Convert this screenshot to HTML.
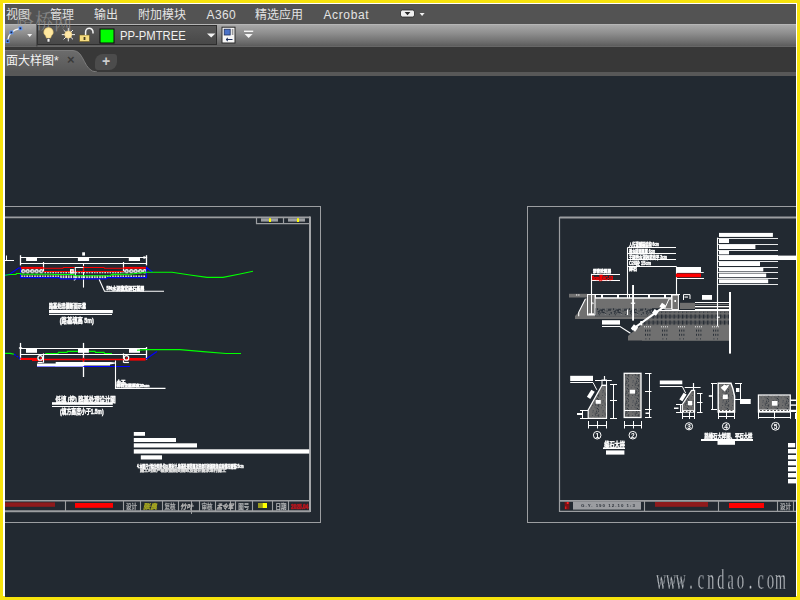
<!DOCTYPE html>
<html><head><meta charset="utf-8">
<style>
*{margin:0;padding:0;box-sizing:border-box}
html,body{width:800px;height:600px;overflow:hidden;background:#f7e30d;font-family:"Liberation Sans","Noto Sans CJK SC",sans-serif}
#frame{position:absolute;left:3px;top:3px;width:794px;height:593px;background:#fff}
#app{position:absolute;left:5px;top:4px;width:791px;height:592.5px;background:#222931;overflow:hidden}
#menu{position:absolute;left:0;top:0;width:791px;height:20px;background:#535353}
#menu span{position:absolute;top:4px;font-size:12px;line-height:14px;color:#e4e4e4;white-space:nowrap}
#ribbon{position:absolute;left:0;top:20px;width:791px;height:23px;background:linear-gradient(#c0c0c0 0,#a8a8a8 5%,#8e8e8e 40%,#6c6c6c 80%,#5e5e5e 94%,#6c6c6c 100%)}
#lay{position:absolute;left:32px;top:1px;width:180px;height:20px;background:linear-gradient(#585858,#484848);border:1px solid #2e2e2e}
#lay .t{position:absolute;left:81.5px;top:3px;font-size:12px;line-height:14px;color:#f0f0f0;transform:scaleX(.94);transform-origin:0 0;white-space:nowrap}
#tabs{position:absolute;left:0;top:43px;width:791px;height:25px;background:#383838}
#tabline{position:absolute;left:0;top:68px;width:791px;height:4px;background:#585858}
#tab1{position:absolute;left:0;top:3px;width:95px;height:26px}
#tab1 .t{position:absolute;left:1px;top:4px;font-size:12px;line-height:14px;color:#f2f2f2;white-space:nowrap}
#tab1 .x{position:absolute;left:62px;top:2px;font-size:13px;color:#3a3a3a;font-weight:bold}
#plus{position:absolute;left:90px;top:7px;width:22px;height:16px;background:#4c4c4c;border-radius:8px 3px 8px 3px;color:#ccc;font-weight:bold;font-size:14px;line-height:15px;text-align:center}
#wm{position:absolute;left:11px;top:-2px;font-size:18px;color:rgba(165,165,165,.6);font-family:"Noto Serif CJK SC",serif;transform:skewY(4deg) scaleY(1.2);transform-origin:0 0;white-space:nowrap;letter-spacing:1px}
#site{position:absolute;left:648px;top:561px;font-family:"Liberation Serif",serif;font-size:20px;color:#8a9199;white-space:nowrap;letter-spacing:1px}
svg{position:absolute;left:0;top:0}
#dwg,#ui{will-change:transform}
</style></head><body>
<div id="frame"></div>
<div id="app">
<div id="menu">
<span style="left:1px">视图</span><span style="left:45px">管理</span><span style="left:89px">输出</span><span style="left:133px">附加模块</span><span style="left:201.5px;letter-spacing:.4px">A360</span><span style="left:250px">精选应用</span><span style="left:318.4px;letter-spacing:.65px">Acrobat</span>
</div>
<div id="ribbon"><div id="lay"><span class="t">PP-PMTREE</span></div></div>
<div id="tabs"><div id="tab1"><svg width="95" height="26" style="left:0;top:0"><defs><linearGradient id="tg" x1="0" y1="0" x2="0" y2="1"><stop offset="0" stop-color="#6c6c6c"/><stop offset="1" stop-color="#545454"/></linearGradient></defs><path d="M0 0.5 H68 C80 0.5 78 22 92 22 V26 H0Z" fill="url(#tg)"/><path d="M0 0.5 H68 C80 0.5 78 22 92 22" fill="none" stroke="#7c7c7c" stroke-width="1"/></svg><span class="t">面大样图*</span><span class="x">×</span></div><div id="plus">+</div></div>
<div id="tabline"></div>
<div id="wm">路桥网</div>
<svg id="ui" width="791" height="592" viewBox="5 4 791 592">
<g>
<path d="M7.5 41 C8.5 34 13 29.6 20.4 28.4" fill="none" stroke="#f4f4f4" stroke-width="1.2"/>
<rect x="6.2" y="39.8" width="2.8" height="2.8" fill="#202840" stroke="#5a96ff" stroke-width=".9"/>
<rect x="10" y="31" width="2.8" height="2.8" fill="#202840" stroke="#5a96ff" stroke-width=".9"/>
<rect x="19" y="27" width="2.8" height="2.8" fill="#202840" stroke="#5a96ff" stroke-width=".9"/>
<polygon points="27.2,34 32.2,34 29.7,37" fill="#f4f4f4"/>
<rect x="36.4" y="24" width="1" height="22.5" fill="#3a3a3a"/>
<path d="M48.5 27.6 a4.6 4.6 0 0 1 3 8.2 l-1 2.4 h-4 l-1 -2.4 a4.6 4.6 0 0 1 3 -8.2z" fill="#ffe8a0" stroke="#d8b860" stroke-width=".5"/>
<rect x="47.1" y="38.4" width="2.8" height="3.6" fill="#f4f4f4" stroke="#333" stroke-width=".5"/>
<g stroke="#e8e8e8" stroke-width="1"><line x1="68.3" y1="28" x2="68.3" y2="41.4"/><line x1="61.8" y1="34.6" x2="75" y2="34.6"/><line x1="63.6" y1="30" x2="73" y2="39.4"/><line x1="73" y1="30" x2="63.6" y2="39.4"/><text transform="translate(0 589.3) scale(1 2.15)" x="661.0 671.0 680.9 690.9 700.8 710.8 720.7 730.6 740.6 750.5 760.5 770.5 780.4" y="0" text-anchor="middle" font-family="Liberation Serif,serif" font-size="14" fill="#c4c8cc" stroke="#222931" stroke-width=".3">www.cndao.com</text>
</g>
<circle cx="68.3" cy="34.6" r="3.6" fill="#ffe8a8" stroke="#e8c878" stroke-width=".6"/>
<rect x="79.6" y="35" width="9.8" height="6.6" fill="#f6dc80" stroke="#6a5a20" stroke-width=".6"/>
<rect x="83.6" y="37" width="1.8" height="3" fill="#4a4020"/>
<path d="M85.6 35 v-3 a3.6 3.6 0 0 1 7.4 0 v1.6" fill="none" stroke="#f4f4f4" stroke-width="1.5"/>
<rect x="100" y="29" width="14" height="14" fill="#00ff00" stroke="#0a0a0a" stroke-width="1"/>
<polygon points="207,33.4 215.4,33.4 211.2,37.6" fill="#f4f4f4"/>
<rect x="222" y="27.2" width="13" height="15.8" fill="#f6f6f6" stroke="#2a2a2a" stroke-width="1"/>
<rect x="224.2" y="29.2" width="6" height="5.8" fill="#4a72c8" stroke="#20305a" stroke-width=".8"/>
<rect x="231.8" y="29" width="1.6" height="6" fill="#9a9a9a"/>
<path d="M226 39.5 h6.5 M226 39.5 l2 -1.6 M226 39.5 l2 1.6" stroke="#20305a" stroke-width="1" fill="none"/>
<rect x="244" y="30.6" width="9.2" height="1.4" fill="#f4f4f4"/>
<polygon points="244.6,34 252.6,34 248.6,38" fill="#f4f4f4"/>
<rect x="400.5" y="10" width="14" height="7" rx="2" fill="#f0f0f0" stroke="#2a2a2a" stroke-width=".8"/>
<polygon points="404.6,12 410.4,12 407.5,15.2" fill="#2a2a2a"/>
<polygon points="419.6,13 424.6,13 422.1,16" fill="#f0f0f0"/>
<text transform="translate(0 589.3) scale(1 2.15)" x="661.0 671.0 680.9 690.9 700.8 710.8 720.7 730.6 740.6 750.5 760.5 770.5 780.4" y="0" text-anchor="middle" font-family="Liberation Serif,serif" font-size="14" fill="#c4c8cc" stroke="#222931" stroke-width=".3">www.cndao.com</text>
</g>

</svg>
<svg id="dwg" width="791" height="592" viewBox="5 4 791 592" >
<defs>
<pattern id="hx" x="21" y="269" width="4.5" height="4.4" patternUnits="userSpaceOnUse"><circle cx="2.25" cy="2.2" r="1.45" fill="none" stroke="#fff" stroke-width="1.35"/><rect x="0" y="1.5" width=".8" height="1.4" fill="#fff"/></pattern>
<pattern id="dots" x="21" y="0" width="2.6" height="1.4" patternUnits="userSpaceOnUse"><rect x=".3" y="0" width="1.3" height="1.4" fill="#fff"/></pattern>
<pattern id="st1" width="10" height="10" patternUnits="userSpaceOnUse"><rect width="10" height="10" fill="#6e6e6e"/><rect x="2.2" y="5.0" width=".9" height=".9" fill="#3c4249"/><rect x="8.4" y="4.4" width=".9" height=".9" fill="#2a3038"/><rect x="5.6" y="8.4" width=".9" height=".9" fill="#4a4e54"/><rect x="2.4" y="2.2" width=".9" height=".9" fill="#4a4e54"/><rect x="5.0" y="5.1" width=".9" height=".9" fill="#4a4e54"/><rect x="5.9" y="1.4" width=".9" height=".9" fill="#30363e"/><rect x="8.0" y="4.8" width=".9" height=".9" fill="#2a3038"/><rect x="6.2" y="0.6" width=".9" height=".9" fill="#2a3038"/><rect x="2.8" y="0.3" width=".9" height=".9" fill="#3c4249"/><rect x="4.3" y="6.6" width=".9" height=".9" fill="#4a4e54"/><rect x="6.6" y="8.5" width=".9" height=".9" fill="#4a4e54"/><rect x="6.7" y="5.3" width=".9" height=".9" fill="#30363e"/><rect x="8.1" y="0.9" width=".9" height=".9" fill="#30363e"/><rect x="4.6" y="2.4" width=".9" height=".9" fill="#4a4e54"/><rect x="7.2" y="7.9" width=".9" height=".9" fill="#4a4e54"/><rect x="4.7" y="3.5" width=".9" height=".9" fill="#3c4249"/><rect x="4.9" y="3.7" width=".9" height=".9" fill="#30363e"/><rect x="8.3" y="6.3" width=".9" height=".9" fill="#2a3038"/><rect x="7.9" y="9.1" width=".9" height=".9" fill="#30363e"/><rect x="6.4" y="3.0" width=".9" height=".9" fill="#2a3038"/><rect x="6.6" y="1.9" width=".9" height=".9" fill="#3c4249"/><rect x="2.6" y="0.6" width=".9" height=".9" fill="#4a4e54"/><rect x="0.8" y="7.4" width=".9" height=".9" fill="#4a4e54"/><rect x="8.3" y="0.2" width=".9" height=".9" fill="#4a4e54"/><rect x="7.1" y="8.0" width=".9" height=".9" fill="#2a3038"/><rect x="5.6" y="7.0" width=".9" height=".9" fill="#4a4e54"/></pattern>
<pattern id="st2" x="596" y="308" width="16" height="8" patternUnits="userSpaceOnUse"><rect width="16" height="8" fill="#646668"/><rect x="6.8" y="3.7" width="1.2" height="1" fill="#3c4249"/><rect x="2.8" y="3.4" width="1" height="1.2" fill="#2a3038"/><rect x="4.6" y="0.8" width="1.5" height="1.2" fill="#252b33"/><rect x="14.5" y="4.2" width="1.5" height="1" fill="#2a3038"/><rect x="12.5" y="0.7" width="1" height="1" fill="#252b33"/><rect x="9.0" y="5.0" width="1.2" height="1" fill="#30363e"/><rect x="7.8" y="4.1" width="1" height="1" fill="#3c4249"/><rect x="6.9" y="2.0" width="1.5" height="1.2" fill="#252b33"/><rect x="4.7" y="1.7" width="1" height="1" fill="#30363e"/><rect x="8.4" y="0.9" width="1.2" height="1.2" fill="#252b33"/><rect x="1.0" y="0.4" width="1" height="1" fill="#252b33"/><rect x="13.9" y="0.6" width="1.5" height="1.2" fill="#3c4249"/><rect x="6.3" y="3.7" width="1.5" height="1.2" fill="#2a3038"/><rect x="5.1" y="2.2" width="1.2" height="1" fill="#252b33"/><rect x="2.0" y="4.5" width="1" height="1.2" fill="#252b33"/><rect x="12.0" y="1.4" width="1.2" height="1" fill="#2a3038"/><rect x="14.8" y="4.9" width="1.5" height="1.2" fill="#3c4249"/><rect x="1.7" y="2.8" width="1" height="1.2" fill="#2a3038"/><rect x="13.0" y="6.1" width="1" height="1" fill="#30363e"/><rect x="2.8" y="6.3" width="1" height="1" fill="#252b33"/><rect x="3.2" y="1.8" width="1.2" height="1.2" fill="#30363e"/><rect x="1.1" y="0.8" width="1" height="1.2" fill="#2a3038"/><rect x="5.6" y="3.0" width="1.5" height="1" fill="#3c4249"/><rect x="13.0" y="1.4" width="1.2" height="1" fill="#2a3038"/><rect x="12.3" y="1.8" width="1" height="1" fill="#2a3038"/><rect x="10.3" y="2.6" width="1.5" height="1" fill="#3c4249"/><rect x="6.3" y="0.9" width="1.5" height="1.2" fill="#252b33"/><rect x="3.6" y="4.5" width="1.2" height="1.2" fill="#30363e"/><rect x="4.4" y="1.4" width="1" height="1" fill="#252b33"/><rect x="7.2" y="4.2" width="1.2" height="1" fill="#252b33"/><rect x="13.8" y="1.5" width="1" height="1.2" fill="#252b33"/><rect x="6.2" y="1.8" width="1" height="1.2" fill="#252b33"/><rect x="5.5" y="3.7" width="1" height="1.2" fill="#2a3038"/><rect x="2.1" y="3.0" width="1.5" height="1" fill="#30363e"/><rect x="8.8" y="5.8" width=".9" height=".9" fill="#9a9a9a"/><rect x="7.1" y="2.4" width=".9" height=".9" fill="#9a9a9a"/><rect x="4.7" y="0.5" width=".9" height=".9" fill="#9a9a9a"/><rect x="9.0" y="0.7" width=".9" height=".9" fill="#9a9a9a"/></pattern>
<pattern id="st3" x="656" y="313.6" width="4.2" height="6" patternUnits="userSpaceOnUse"><rect width="4.2" height="6" fill="#6c6c6c"/><rect x=".5" y=".8" width="1.7" height="4.2" fill="#252b33"/><rect x="2.9" y="1.4" width=".9" height="3" fill="#2d333b"/></pattern>
<pattern id="st3a" x="656" y="310.8" width="4.2" height="2.8" patternUnits="userSpaceOnUse"><rect width="4.2" height="2.8" fill="#6c6c6c"/><rect x=".8" y=".8" width="1.2" height="1.4" fill="#30363e"/><rect x="2.9" y=".6" width=".8" height="1.2" fill="#3a4048"/></pattern>
<pattern id="st4" x="642" y="326" width="17" height="15" patternUnits="userSpaceOnUse"><rect width="17" height="15" fill="#707070"/><g fill="#e8e8e8"><rect x="2" y=".3" width="1" height="1"/><rect x="4" y=".3" width="1" height="1"/><rect x="6" y=".3" width="1" height="1"/><rect x="8" y=".3" width="1" height="1"/></g><g fill="#2a3038"><rect x="3" y="3.6" width="1" height="2"/><rect x="5.2" y="3.6" width="1" height="2"/><rect x="7.4" y="3.6" width="1" height="2"/><rect x="3" y="7.8" width="1" height="2"/><rect x="5.2" y="7.8" width="1" height="2"/><rect x="7.4" y="7.8" width="1" height="2"/><rect x="3.4" y="12.4" width="1" height="1"/><rect x="7" y="12.4" width="1" height="1"/></g></pattern>
</defs>
<rect x="-20.5" y="206.5" width="341.0" height="316.0" fill="none" stroke="#9c9ea1" stroke-width="1"/>
<polyline points="-20,217.3 310,217.3" fill="none" stroke="#9c9ea1" stroke-width="1.7" />
<polyline points="310,216.5 310,512.1" fill="none" stroke="#a4a6a9" stroke-width="2" />
<polyline points="-20,511.2 310,511.2" fill="none" stroke="#9c9ea1" stroke-width="1.9" />
<polyline points="256.5,217.5 256.5,223.7 310,223.7" fill="none" stroke="#9c9ea1" stroke-width="1.2" />
<line x1="283.5" y1="217.5" x2="283.5" y2="223.7" stroke="#9c9ea1" stroke-width="1.2" />
<rect x="261" y="218.3" width="17" height="3.3" fill="#9c9ea1" />
<rect x="288" y="218.3" width="17" height="3.3" fill="#9c9ea1" />
<rect x="269" y="218.3" width="2" height="3.7" fill="#ffff00" />
<rect x="297" y="218.3" width="2" height="3.7" fill="#ffff00" />
<line x1="0" y1="500.8" x2="310" y2="500.8" stroke="#9c9ea1" stroke-width="1.6" />
<line x1="65.5" y1="500.8" x2="65.5" y2="511.2" stroke="#9c9ea1" stroke-width="1.1" />
<line x1="123.5" y1="500.8" x2="123.5" y2="511.2" stroke="#9c9ea1" stroke-width="1.1" />
<line x1="140.5" y1="500.8" x2="140.5" y2="511.2" stroke="#9c9ea1" stroke-width="1.1" />
<line x1="162.5" y1="500.8" x2="162.5" y2="511.2" stroke="#9c9ea1" stroke-width="1.1" />
<line x1="178.5" y1="500.8" x2="178.5" y2="511.2" stroke="#9c9ea1" stroke-width="1.1" />
<line x1="199.5" y1="500.8" x2="199.5" y2="511.2" stroke="#9c9ea1" stroke-width="1.1" />
<line x1="215.5" y1="500.8" x2="215.5" y2="511.2" stroke="#9c9ea1" stroke-width="1.1" />
<line x1="235.5" y1="500.8" x2="235.5" y2="511.2" stroke="#9c9ea1" stroke-width="1.1" />
<line x1="252.5" y1="500.8" x2="252.5" y2="511.2" stroke="#9c9ea1" stroke-width="1.1" />
<line x1="272.5" y1="500.8" x2="272.5" y2="511.2" stroke="#9c9ea1" stroke-width="1.1" />
<line x1="288.5" y1="500.8" x2="288.5" y2="511.2" stroke="#9c9ea1" stroke-width="1.1" />
<rect x="5" y="502.4" width="50" height="4.4" fill="#8e1a1c" />
<rect x="75" y="503" width="38" height="4.8" fill="#ff0000" />
<rect x="258" y="503" width="4.5" height="5" fill="#9a9a1e" />
<rect x="262.5" y="503" width="4.5" height="5" fill="#ffff00" />
<line x1="191.5" y1="500" x2="191.5" y2="514" stroke="#9c9ea1" stroke-width="1" />
<line x1="230.5" y1="501" x2="230.5" y2="512" stroke="#9c9ea1" stroke-width="1" />
<text x="126" y="508.7" font-size="6.5" fill="#a9abad" stroke="#a9abad" stroke-width="0.2" font-weight="bold" textLength="11" lengthAdjust="spacingAndGlyphs">设计</text>
<text x="164.5" y="508.7" font-size="6.5" fill="#a9abad" stroke="#a9abad" stroke-width="0.2" font-weight="bold" textLength="11" lengthAdjust="spacingAndGlyphs">复核</text>
<text x="201.5" y="508.7" font-size="6.5" fill="#a9abad" stroke="#a9abad" stroke-width="0.2" font-weight="bold" textLength="11" lengthAdjust="spacingAndGlyphs">审核</text>
<text x="238.3" y="508.7" font-size="6.5" fill="#a9abad" stroke="#a9abad" stroke-width="0.2" font-weight="bold" textLength="11" lengthAdjust="spacingAndGlyphs">图号</text>
<text x="275.5" y="508.7" font-size="6.5" fill="#b4b6b8" stroke="#b4b6b8" stroke-width="0.2" font-weight="bold" textLength="11" lengthAdjust="spacingAndGlyphs">日期</text>
<text x="143" y="508.7" font-size="7" fill="#aaaa20" stroke="#aaaa20" stroke-width="0.45" font-weight="bold" font-style="italic" textLength="14" lengthAdjust="spacingAndGlyphs">张良</text>
<text x="180" y="508.5" font-size="6.5" fill="#b0b0b0" stroke="#b0b0b0" stroke-width="0.45" font-style="italic" textLength="13" lengthAdjust="spacingAndGlyphs">竹叶</text>
<text x="216.5" y="508.5" font-size="6.5" fill="#b0b0b0" stroke="#b0b0b0" stroke-width="0.45" font-style="italic" textLength="17" lengthAdjust="spacingAndGlyphs">孟令军</text>
<text x="291" y="509" font-size="6.4" fill="#b4161e" stroke="#b4161e" stroke-width="0.7" font-weight="bold" textLength="17.5" lengthAdjust="spacingAndGlyphs">2025.04</text>
<rect x="21" y="269" width="22.5" height="4.4" fill="url(#hx)" />
<rect x="124" y="269" width="22" height="4.4" fill="url(#hx)" />
<rect x="21" y="275.4" width="125" height="1.8" fill="url(#dots)" />
<rect x="44" y="271.9" width="79.5" height="1.4" fill="url(#dots)" />
<rect x="60" y="277" width="47" height="1.4" fill="url(#dots)" />
<line x1="20.5" y1="257.5" x2="147" y2="257.5" stroke="#ffffff" stroke-width="1" />
<line x1="20.5" y1="263.5" x2="147" y2="263.5" stroke="#ffffff" stroke-width="1" />
<line x1="20.5" y1="255.2" x2="20.5" y2="265.4" stroke="#ffffff" stroke-width="1.3" />
<line x1="146.5" y1="255.2" x2="146.5" y2="265.4" stroke="#ffffff" stroke-width="1.3" />
<polygon points="147.6,257.5 143.5,256 143.5,259" fill="#ffffff" stroke="none" stroke-width="0" />
<line x1="43.5" y1="262" x2="43.5" y2="271.4" stroke="#ffffff" stroke-width="1.2" />
<line x1="123.5" y1="262" x2="123.5" y2="271.4" stroke="#ffffff" stroke-width="1.2" />
<rect x="26.1" y="258" width="10.9" height="3" fill="#ffffff" />
<rect x="77.9" y="258" width="11.2" height="3" fill="#ffffff" />
<rect x="128.8" y="258" width="11.2" height="3" fill="#ffffff" />
<rect x="82.2" y="252.3" width="2.8" height="3.3" fill="#ffffff" />
<line x1="83.5" y1="263.5" x2="83.5" y2="287.6" stroke="#ffffff" stroke-width="1.1" />
<line x1="5" y1="260.5" x2="14" y2="260.5" stroke="#ffffff" stroke-width="1" />
<line x1="6.5" y1="255.5" x2="6.5" y2="260" stroke="#ffffff" stroke-width="1" />
<rect x="20.5" y="266.9" width="23.2" height="1.9" fill="#ff0000" />
<rect x="123.5" y="266.9" width="23.0" height="1.9" fill="#ff0000" />
<polyline points="43.7,268.2 62.9,268.2 63.4,267.5 104,267.5 104.5,268.2 123.5,268.2" fill="none" stroke="#ff0000" stroke-width="1.1" />
<line x1="43.7" y1="271.5" x2="123.5" y2="271.5" stroke="#ff0000" stroke-width="1.1" />
<line x1="83.5" y1="266" x2="83.5" y2="271.4" stroke="#ff0000" stroke-width="1.1" />
<rect x="70" y="269.1" width="3.8" height="4.5" fill="#ffffff" />
<rect x="71.3" y="270.5" width="1.2" height="1.3" fill="#ff3030" />
<polyline points="83.5,267.5 75.3,267.5 75.3,279.5 73.8,280.2" fill="none" stroke="#ffffff" stroke-width="1.1" />
<polyline points="5,275.2 10,274 18.6,268 20.5,268 20.5,277.6 59.5,277.6 60.5,278.9 106.5,278.9 107.5,277.6 146.5,277.6 146.5,267.5 149,269.5 152.5,272" fill="none" stroke="#0000ff" stroke-width="1.15" />
<polyline points="5,275.3 10,274.5 16,274.4 16.5,273.5 20.5,273.5 21,274.2 52,274.2 53,274.5 73,274.5 75,275.7 110,275.7 112,274.4 130,274.2 146,272.2 172,272.2 190,275 207,277.3 223,277.3 240,274 253,271.3" fill="none" stroke="#00ff00" stroke-width="1.15" />
<polyline points="99.2,279.5 104.5,291.3 164,291.3" fill="none" stroke="#ffffff" stroke-width="1.1" />
<text x="106.4" y="289.6" font-size="4.6" fill="#ffffff" stroke="#ffffff" stroke-width="0.45" font-weight="bold" textLength="38" lengthAdjust="spacingAndGlyphs">5%水泥稳定碎石基层</text>
<text x="49" y="308.3" font-size="5.6" fill="#ffffff" stroke="#ffffff" stroke-width="0.45" font-weight="bold" textLength="37" lengthAdjust="spacingAndGlyphs">路基处理横断面示意</text>
<rect x="49" y="310" width="63.8" height="3.2" fill="#ffffff" />
<line x1="49" y1="314.5" x2="112" y2="314.5" stroke="#ffffff" stroke-width="1" />
<text x="59.8" y="322.6" font-size="7" fill="#ffffff" stroke="#ffffff" stroke-width="0.45" font-weight="bold" textLength="34" lengthAdjust="spacingAndGlyphs">(路基填高 5m)</text>
<line x1="20.5" y1="348.5" x2="147" y2="348.5" stroke="#ffffff" stroke-width="1.1" />
<line x1="20.5" y1="354.5" x2="147" y2="354.5" stroke="#ffffff" stroke-width="1.1" />
<line x1="20.5" y1="342.9" x2="20.5" y2="359.8" stroke="#ffffff" stroke-width="1.3" />
<polygon points="18.6,348 20.5,346.5 22.4,348 20.5,349.5" fill="#ffffff" stroke="none" stroke-width="0" />
<line x1="146.5" y1="347" x2="146.5" y2="359.5" stroke="#ffffff" stroke-width="1.3" />
<rect x="26" y="348.7" width="11" height="4.1" fill="#ffffff" />
<rect x="78" y="348.7" width="10.9" height="4.1" fill="#ffffff" />
<rect x="129" y="348.7" width="11" height="4.1" fill="#ffffff" />
<line x1="83.5" y1="342.9" x2="83.5" y2="377" stroke="#ffffff" stroke-width="1.3" />
<line x1="43.5" y1="353.4" x2="43.5" y2="362.8" stroke="#ffffff" stroke-width="1.2" />
<line x1="123.5" y1="353.4" x2="123.5" y2="362.8" stroke="#ffffff" stroke-width="1.2" />
<polyline points="5,353.3 10,353.4 14,354.3" fill="none" stroke="#00ff00" stroke-width="1.15" />
<polyline points="45.2,353.5 58,353.5 58.5,352.3 67,352.3 67.5,351.4 78,351.4" fill="none" stroke="#00ff00" stroke-width="1.15" />
<polyline points="89,351.4 95,351.4 95.5,352.3 104,352.3 104.5,353.5 112,353.5" fill="none" stroke="#00ff00" stroke-width="1.15" />
<polyline points="137,350.2 146,349.6 180,349.6 203,351.6 226,353.5 241,353.5" fill="none" stroke="#00ff00" stroke-width="1.15" />
<line x1="14" y1="354.3" x2="20.5" y2="358.6" stroke="#0000ff" stroke-width="1.3" stroke-dasharray="2,1"/>
<line x1="146" y1="359" x2="157" y2="351.5" stroke="#0000ff" stroke-width="1.15" />
<line x1="37" y1="366.5" x2="130" y2="366.5" stroke="#0000ff" stroke-width="1.2" />
<rect x="20.5" y="357.9" width="16.5" height="2.1" fill="#ff0000" />
<line x1="32" y1="360.5" x2="43" y2="360.5" stroke="#ff0000" stroke-width="1.1" />
<line x1="44" y1="359.5" x2="130" y2="359.5" stroke="#ff0000" stroke-width="1.4" />
<rect x="130" y="358" width="15.5" height="2.6" fill="#ff0000" />
<line x1="83.5" y1="357.8" x2="83.5" y2="361.8" stroke="#ff0000" stroke-width="1.3" />
<rect x="37" y="363.5" width="19" height="3.0" fill="#ffffff" />
<rect x="55.7" y="362" width="27.7" height="4.6" fill="#ffffff" />
<rect x="83.4" y="362" width="26.6" height="3.5" fill="#ffffff" />
<polygon points="110,362 115.5,362.4 115.5,363.4 110,364.5" fill="#ffffff" stroke="none" stroke-width="0" />
<circle cx="40.2" cy="357.9" r="2.3" fill="none" stroke="#ffffff" stroke-width="1.3"/>
<circle cx="40.800000000000004" cy="358.2" r=".9" fill="#ff0000"/>
<line x1="37.7" y1="362.5" x2="42.7" y2="362.5" stroke="#ffffff" stroke-width="1.2" />
<circle cx="126.4" cy="357.9" r="2.3" fill="none" stroke="#ffffff" stroke-width="1.3"/>
<circle cx="127.0" cy="358.2" r=".9" fill="#ff0000"/>
<line x1="123.9" y1="362.5" x2="128.9" y2="362.5" stroke="#ffffff" stroke-width="1.2" />
<polyline points="115.5,360.5 115.5,388.4 165.5,388.4" fill="none" stroke="#ffffff" stroke-width="1.1" />
<text x="116.5" y="382.6" font-size="3.6" fill="#ffffff" stroke="#ffffff" stroke-width="0.45" font-weight="bold" textLength="9" lengthAdjust="spacingAndGlyphs">土工</text>
<line x1="116.5" y1="383.5" x2="126" y2="383.5" stroke="#ffffff" stroke-width="0.8" />
<text x="116.5" y="387.4" font-size="3.8" fill="#ffffff" stroke="#ffffff" stroke-width="0.45" font-weight="bold" textLength="33" lengthAdjust="spacingAndGlyphs">碎石垫层厚度30cm</text>
<text x="55.6" y="401.6" font-size="7.4" fill="#ffffff" stroke="#ffffff" stroke-width="0.45" font-weight="bold" textLength="60" lengthAdjust="spacingAndGlyphs">低填 (挖) 路基处理设计图</text>
<rect x="52" y="402.2" width="60.8" height="2.6" fill="#ffffff" />
<line x1="52" y1="406.5" x2="112.8" y2="406.5" stroke="#ffffff" stroke-width="1" />
<text x="60" y="413.8" font-size="6.6" fill="#ffffff" stroke="#ffffff" stroke-width="0.45" font-weight="bold" textLength="43.5" lengthAdjust="spacingAndGlyphs">(填方高度小于1.5m)</text>
<rect x="133.8" y="432" width="11.2" height="3.8" fill="#ffffff" />
<rect x="133.8" y="438" width="42.2" height="4" fill="#ffffff" />
<rect x="133.8" y="443.3" width="63.2" height="4.2" fill="#ffffff" />
<rect x="133.8" y="449.3" width="175.4" height="4.3" fill="#ffffff" />
<rect x="140.8" y="455.3" width="21.2" height="4.2" fill="#ffffff" />
<text x="137" y="467.8" font-size="4.8" fill="#ffffff" stroke="#ffffff" stroke-width="0.45" font-weight="bold" textLength="106.5" lengthAdjust="spacingAndGlyphs">4.本图尺寸除注明外均以厘米计,路基处理范围及深度可根据现场实际情况调整25cm</text>
<text x="140" y="472.4" font-size="3.6" fill="#e0e0e0" stroke="#e0e0e0" stroke-width="0.45" textLength="86" lengthAdjust="spacingAndGlyphs">施工时应严格按照相关规范及设计要求进行施工</text>
<rect x="527.5" y="206.5" width="302.5" height="316.0" fill="none" stroke="#9c9ea1" stroke-width="1"/>
<polyline points="830,217.5 559.5,217.5" fill="none" stroke="#9c9ea1" stroke-width="2" />
<polyline points="559.5,217 559.5,511.3 830,511.3" fill="none" stroke="#9c9ea1" stroke-width="1.2" />
<line x1="559.5" y1="500.8" x2="800" y2="500.8" stroke="#9c9ea1" stroke-width="1.8" />
<line x1="644.5" y1="500.8" x2="644.5" y2="511.3" stroke="#9c9ea1" stroke-width="1.1" />
<line x1="718.5" y1="500.8" x2="718.5" y2="511.3" stroke="#9c9ea1" stroke-width="1.1" />
<line x1="777.5" y1="500.8" x2="777.5" y2="511.3" stroke="#9c9ea1" stroke-width="1.1" />
<line x1="793.5" y1="500.8" x2="793.5" y2="511.3" stroke="#9c9ea1" stroke-width="1.1" />
<rect x="564.6" y="502" width="4.8" height="7.4" fill="#7a1216" />
<rect x="566.8" y="502" width="1.8" height="2" fill="#ff2020" />
<rect x="565" y="506.5" width="1.4" height="2.5" fill="#e01818" />
<rect x="573" y="501.6" width="68" height="8.0" fill="#9b9da1" />
<text x="581" y="507.4" font-size="4.4" fill="#2a3038" stroke="#2a3038" stroke-width="0" textLength="54" lengthAdjust="spacing" font-weight="bold">G.Y. 190 12.10 1:3</text>
<rect x="655" y="502" width="53" height="4.8" fill="#8e1a1c" />
<rect x="729" y="503" width="35" height="5" fill="#ff0000" />
<text x="780" y="508.7" font-size="6.5" fill="#a9abad" stroke="#a9abad" stroke-width="0.2" font-weight="bold" textLength="11" lengthAdjust="spacingAndGlyphs">设计</text>
<rect x="788" y="443" width="7.2" height="4.4" fill="#ffffff" />
<rect x="788" y="449" width="12" height="4.4" fill="#ffffff" />
<rect x="788" y="455" width="12" height="4.4" fill="#ffffff" />
<rect x="788" y="461" width="12" height="4.4" fill="#ffffff" />
<rect x="788" y="467" width="12" height="4.4" fill="#ffffff" />
<rect x="788" y="473" width="12" height="4.4" fill="#ffffff" />
<rect x="788" y="479" width="12" height="4.4" fill="#ffffff" />
<line x1="591.5" y1="273.8" x2="591.5" y2="315" stroke="#ffffff" stroke-width="1.1" />
<line x1="591" y1="274.5" x2="620" y2="274.5" stroke="#ffffff" stroke-width="1" />
<line x1="591" y1="280.5" x2="620" y2="280.5" stroke="#ffffff" stroke-width="1" />
<text x="593" y="273.4" font-size="4" fill="#ffffff" stroke="#ffffff" stroke-width="0.45" font-weight="bold" textLength="18" lengthAdjust="spacingAndGlyphs">沥青砼面层</text>
<text x="592" y="279.9" font-size="5.6" fill="#ff0000" stroke="#ff0000" stroke-width="0.45" font-weight="bold" textLength="21" lengthAdjust="spacingAndGlyphs">5cm厚AC-13</text>
<line x1="627.5" y1="247.4" x2="627.5" y2="297" stroke="#ffffff" stroke-width="1.1" />
<line x1="627.5" y1="247.5" x2="676" y2="247.5" stroke="#ffffff" stroke-width="1" />
<line x1="627.5" y1="253.5" x2="676" y2="253.5" stroke="#ffffff" stroke-width="1" />
<line x1="627.5" y1="259.5" x2="676" y2="259.5" stroke="#ffffff" stroke-width="1" />
<line x1="627.5" y1="266.5" x2="676" y2="266.5" stroke="#ffffff" stroke-width="1" />
<text x="629" y="246.3" font-size="4.6" fill="#ffffff" stroke="#ffffff" stroke-width="0.45" font-weight="bold" textLength="30" lengthAdjust="spacingAndGlyphs">人行道铺装结构 6cm</text>
<text x="629" y="252.8" font-size="4.6" fill="#ffffff" stroke="#ffffff" stroke-width="0.45" font-weight="bold" textLength="26" lengthAdjust="spacingAndGlyphs">透水砖面层厚 6cm</text>
<text x="629" y="259" font-size="4.6" fill="#ffffff" stroke="#ffffff" stroke-width="0.45" font-weight="bold" textLength="38" lengthAdjust="spacingAndGlyphs">干硬性水泥砂浆找平 3cm</text>
<text x="629" y="265.4" font-size="4.6" fill="#ffffff" stroke="#ffffff" stroke-width="0.45" font-weight="bold" textLength="22" lengthAdjust="spacingAndGlyphs">C20砼 15cm</text>
<text x="629" y="271.2" font-size="4" fill="#ffffff" stroke="#ffffff" stroke-width="0.45" font-weight="bold" textLength="8" lengthAdjust="spacingAndGlyphs">碎石</text>
<line x1="676.5" y1="266.3" x2="676.5" y2="296" stroke="#ffffff" stroke-width="1.1" />
<rect x="676" y="267" width="25" height="5" fill="#ffffff" />
<line x1="676" y1="272.5" x2="703.8" y2="272.5" stroke="#ffffff" stroke-width="0.9" />
<rect x="676" y="273.5" width="25" height="3.7" fill="#ff0000" />
<line x1="676" y1="278.5" x2="704" y2="278.5" stroke="#ffffff" stroke-width="1" />
<line x1="717.5" y1="237.6" x2="717.5" y2="326.4" stroke="#ffffff" stroke-width="1.1" />
<rect x="719" y="232.9" width="53.9" height="4.0" fill="#ffffff" />
<line x1="717.8" y1="238.5" x2="778" y2="238.5" stroke="#ffffff" stroke-width="0.9" />
<line x1="717.8" y1="244.5" x2="778" y2="244.5" stroke="#ffffff" stroke-width="0.9" />
<line x1="717.8" y1="250.5" x2="778" y2="250.5" stroke="#ffffff" stroke-width="0.9" />
<line x1="717.8" y1="255.5" x2="778" y2="255.5" stroke="#ffffff" stroke-width="0.9" />
<line x1="717.8" y1="261.5" x2="778" y2="261.5" stroke="#ffffff" stroke-width="0.9" />
<line x1="717.8" y1="267.5" x2="778" y2="267.5" stroke="#ffffff" stroke-width="0.9" />
<line x1="717.8" y1="272.5" x2="778" y2="272.5" stroke="#ffffff" stroke-width="0.9" />
<line x1="717.8" y1="278.5" x2="778" y2="278.5" stroke="#ffffff" stroke-width="0.9" />
<line x1="717.8" y1="284.5" x2="778" y2="284.5" stroke="#ffffff" stroke-width="0.9" />
<rect x="719" y="239" width="10" height="4" fill="#ffffff" />
<rect x="719" y="244.8" width="36.4" height="4.2" fill="#ffffff" />
<rect x="719" y="250.7" width="10" height="3.7" fill="#ffffff" />
<rect x="719" y="255.6" width="81" height="4.4" fill="#ffffff" />
<rect x="719" y="261.8" width="41" height="4.2" fill="#ffffff" />
<rect x="719" y="267.5" width="44.3" height="3.9" fill="#ffffff" />
<rect x="719" y="273.5" width="47.2" height="3.7" fill="#ffffff" />
<rect x="719" y="279.3" width="49.2" height="3.9" fill="#ffffff" />
<rect x="569" y="293.8" width="18.5" height="3.7" fill="#707070" />
<rect x="576" y="294.3" width="1.3" height="1.3" fill="#ddd" />
<rect x="578.2" y="294.3" width="1.3" height="1.3" fill="#ddd" />
<polygon points="587.5,297.5 595,297.5 595,318.7 575,318.7 575,316 578.7,312.3 585.5,298.7" fill="#707070" stroke="none" stroke-width="0" />
<polyline points="585.5,298.7 578.7,312.3 578.7,316.7" fill="none" stroke="#ffffff" stroke-width="1.1" />
<rect x="595" y="298.3" width="76.8" height="9.9" fill="#707070" />
<rect x="596" y="308" width="56" height="8.3" fill="url(#st2)" />
<rect x="575" y="316.3" width="77" height="2.7" fill="#707070" />
<line x1="587.5" y1="294.5" x2="680" y2="294.5" stroke="#ffffff" stroke-width="1.1" />
<line x1="595" y1="298.1" x2="671.8" y2="298.1" stroke="#ffffff" stroke-width="1.5" />
<line x1="595.5" y1="294.5" x2="595.5" y2="298" stroke="#ffffff" stroke-width="1" />
<line x1="601.5" y1="294.5" x2="601.5" y2="298" stroke="#ffffff" stroke-width="1" />
<line x1="602.5" y1="294.5" x2="602.5" y2="298" stroke="#ffffff" stroke-width="1" />
<line x1="617.5" y1="294.5" x2="617.5" y2="298" stroke="#ffffff" stroke-width="1" />
<line x1="618.5" y1="294.5" x2="618.5" y2="298" stroke="#ffffff" stroke-width="1" />
<line x1="627.5" y1="294.5" x2="627.5" y2="298" stroke="#ffffff" stroke-width="1" />
<line x1="629.5" y1="294.5" x2="629.5" y2="298" stroke="#ffffff" stroke-width="1" />
<line x1="648.5" y1="294.5" x2="648.5" y2="298" stroke="#ffffff" stroke-width="1" />
<line x1="649.5" y1="294.5" x2="649.5" y2="298" stroke="#ffffff" stroke-width="1" />
<line x1="664.5" y1="294.5" x2="664.5" y2="298" stroke="#ffffff" stroke-width="1" />
<line x1="665.5" y1="294.5" x2="665.5" y2="298" stroke="#ffffff" stroke-width="1" />
<line x1="671.5" y1="294.5" x2="671.5" y2="298" stroke="#ffffff" stroke-width="1" />
<rect x="587.5" y="294.5" width="7.5" height="20.5" fill="#707070" stroke="#ffffff" stroke-width="1"/>
<line x1="591.5" y1="294.5" x2="591.5" y2="315" stroke="#ffffff" stroke-width="1" />
<polygon points="592.3,302 594,303.3 592.3,304.6" fill="#ffffff" stroke="none" stroke-width="0" />
<rect x="588.5" y="313.3" width="5.5" height="1.7" fill="#ffffff" />
<rect x="632.1" y="285" width="1.9" height="35.6" fill="#ffffff" />
<rect x="630.8" y="302.6" width="4.4" height="1.2" fill="#ffffff" />
<line x1="627.5" y1="309.5" x2="627.5" y2="315" stroke="#ffffff" stroke-width="1.1" />
<rect x="602" y="320.2" width="18" height="4.4" fill="#ffffff" />
<polyline points="602,326.5 620,326.5 630.5,333.3" fill="none" stroke="#ffffff" stroke-width="1.1" />
<polygon points="628,340.6 628,336 632,332.5 650,318.7 652,316 660,310 730,310 730,340.6" fill="#707070" stroke="none" stroke-width="0" />
<rect x="656" y="310.8" width="74" height="2.8" fill="url(#st3a)" />
<rect x="656" y="313.6" width="74" height="12.0" fill="url(#st3)" />
<polygon points="640,326 656,326 656,312.5" fill="url(#st3)" stroke="none" stroke-width="0" />
<rect x="642" y="326" width="88" height="14.6" fill="url(#st4)" />
<polyline points="632,329.6 665.5,305.6" fill="none" stroke="#ffffff" stroke-width="2" />
<polygon points="630.8,328.6 633.9,324.3 638.2,327.4 635.1,331.7" fill="#ffffff" stroke="none" stroke-width="0" />
<polygon points="651.9,312.90000000000003 654.6999999999999,308.90000000000003 658.6999999999999,311.7 655.9,315.7" fill="#ffffff" stroke="none" stroke-width="0" />
<polygon points="659.4,306.6 662.0,302.8 665.8000000000001,305.4 663.2,309.2" fill="#ffffff" stroke="none" stroke-width="0" />
<rect x="640.3" y="321" width="2.0" height="4.4" fill="#ffffff" />
<polygon points="664.5,309 669,299 671.8,299 671.8,309" fill="#707070" stroke="#ffffff" stroke-width="1" />
<rect x="672" y="295" width="6.4" height="14.6" fill="#707070" stroke="#ffffff" stroke-width="1"/>
<rect x="674.4" y="300" width="1.6" height="2" fill="#ffffff" />
<rect x="680" y="302.8" width="15" height="6.2" fill="#707070" />
<line x1="695" y1="302.5" x2="730" y2="302.5" stroke="#ffffff" stroke-width="1" />
<line x1="695" y1="306.5" x2="730" y2="306.5" stroke="#ffffff" stroke-width="1" />
<line x1="695" y1="309.5" x2="730" y2="309.5" stroke="#ffffff" stroke-width="1" />
<line x1="695" y1="304.5" x2="730" y2="304.5" stroke="#707070" stroke-width="1" />
<line x1="695" y1="307.5" x2="730" y2="307.5" stroke="#707070" stroke-width="1" />
<line x1="660" y1="310.5" x2="730" y2="310.5" stroke="#ffffff" stroke-width="1" />
<rect x="702" y="295" width="10" height="4.8" fill="#ffffff" />
<polyline points="683.5,300 683.5,294.6 690,294.6 690,299" fill="none" stroke="#ffffff" stroke-width="1" />
<rect x="684.5" y="296.5" width="3.5" height="1.1" fill="#ffffff" />
<line x1="717.5" y1="290" x2="717.5" y2="326.4" stroke="#ffffff" stroke-width="1.1" />
<rect x="716.8" y="316.6" width="3.0" height="1.2" fill="#ffffff" />
<rect x="729" y="292" width="2" height="61.6" fill="#ffffff" />
<rect x="570.2" y="375.8" width="22.8" height="5.2" fill="#ffffff" />
<polyline points="570.2,382.5 593,382.5 596.8,389.8" fill="none" stroke="#ffffff" stroke-width="1" />
<polygon points="602,385.3 606.5,385.3 606.5,418.3 588.2,418.3 588.2,410" fill="url(#st1)" stroke="#ffffff" stroke-width="1.2" />
<rect x="602" y="380" width="4.5" height="5.3" fill="none" stroke="#ffffff" stroke-width="1"/>
<line x1="595" y1="380.5" x2="611.8" y2="380.5" stroke="#ffffff" stroke-width="1" />
<line x1="604.5" y1="376" x2="604.5" y2="380" stroke="#ffffff" stroke-width="1.2" />
<rect x="-4.2" y="-2" width="8.4" height="4" fill="#fff" transform="translate(590.8 394.3) rotate(-58)"/>
<rect x="595.7" y="400" width="5.1" height="3.8" fill="#ffffff" />
<line x1="613.5" y1="384.2" x2="613.5" y2="418.3" stroke="#ffffff" stroke-width="1" />
<line x1="610" y1="384.5" x2="617" y2="384.5" stroke="#ffffff" stroke-width="1" />
<line x1="610" y1="400.5" x2="617" y2="400.5" stroke="#ffffff" stroke-width="1" />
<line x1="610" y1="418.5" x2="617" y2="418.5" stroke="#ffffff" stroke-width="1" />
<line x1="582.5" y1="410" x2="582.5" y2="418.3" stroke="#ffffff" stroke-width="1" />
<line x1="580" y1="410.5" x2="588" y2="410.5" stroke="#ffffff" stroke-width="1" />
<line x1="580" y1="418.5" x2="588" y2="418.5" stroke="#ffffff" stroke-width="1" />
<rect x="577" y="413" width="5" height="2" fill="#ffffff" />
<line x1="588.2" y1="425.5" x2="606.5" y2="425.5" stroke="#ffffff" stroke-width="1" />
<line x1="588.5" y1="421" x2="588.5" y2="428.5" stroke="#ffffff" stroke-width="1" />
<line x1="597.5" y1="421" x2="597.5" y2="428.5" stroke="#ffffff" stroke-width="1" />
<line x1="606.5" y1="421" x2="606.5" y2="428.5" stroke="#ffffff" stroke-width="1" />
<rect x="624.2" y="373.3" width="16.8" height="44.2" fill="url(#st1)" stroke="#ffffff" stroke-width="1.3"/>
<line x1="624.2" y1="410.5" x2="641" y2="410.5" stroke="#ffffff" stroke-width="1" />
<rect x="629.8" y="389.8" width="5.2" height="3.8" fill="#ffffff" />
<line x1="649.5" y1="373.3" x2="649.5" y2="417.5" stroke="#ffffff" stroke-width="1" />
<line x1="645" y1="373.5" x2="651.5" y2="373.5" stroke="#ffffff" stroke-width="1" />
<line x1="645" y1="391.5" x2="651.5" y2="391.5" stroke="#ffffff" stroke-width="1" />
<line x1="645" y1="409.5" x2="651.5" y2="409.5" stroke="#ffffff" stroke-width="1" />
<line x1="645" y1="417.5" x2="651.5" y2="417.5" stroke="#ffffff" stroke-width="1" />
<rect x="645.5" y="412.5" width="4.5" height="1.5" fill="#ffffff" />
<line x1="624.2" y1="425.5" x2="641" y2="425.5" stroke="#ffffff" stroke-width="1" />
<line x1="624.5" y1="421" x2="624.5" y2="428.5" stroke="#ffffff" stroke-width="1" />
<line x1="633.5" y1="421" x2="633.5" y2="428.5" stroke="#ffffff" stroke-width="1" />
<line x1="641.5" y1="421" x2="641.5" y2="428.5" stroke="#ffffff" stroke-width="1" />
<circle cx="597.2" cy="435.2" r="3.8" fill="none" stroke="#fff" stroke-width="1" shape-rendering="auto"/><text x="597.2" y="437.59999999999997" font-size="6.5" fill="#fff" text-anchor="middle" font-weight="bold">1</text>
<circle cx="632.8" cy="435.2" r="3.8" fill="none" stroke="#fff" stroke-width="1" shape-rendering="auto"/><text x="632.8" y="437.59999999999997" font-size="6.5" fill="#fff" text-anchor="middle" font-weight="bold">2</text>
<text x="604.3" y="446.6" font-size="6.6" fill="#ffffff" stroke="#ffffff" stroke-width="0.45" font-weight="bold" textLength="20.5" lengthAdjust="spacingAndGlyphs">缘石大样</text>
<rect x="603" y="447.4" width="22" height="1.6" fill="#ffffff" />
<rect x="606" y="450.4" width="18.4" height="4.2" fill="#ffffff" />
<rect x="659.8" y="380.5" width="22.5" height="3.8" fill="#ffffff" />
<polyline points="659.8,386.5 682.3,386.5 685.6,393" fill="none" stroke="#ffffff" stroke-width="1" />
<polygon points="691.6,390.3 694.6,390.3 694.6,412 682.3,412 682.3,404.4" fill="url(#st1)" stroke="#ffffff" stroke-width="1.2" />
<line x1="684.7" y1="387.5" x2="700.6" y2="387.5" stroke="#ffffff" stroke-width="1" />
<line x1="693.5" y1="383" x2="693.5" y2="390.3" stroke="#ffffff" stroke-width="1.2" />
<rect x="-4" y="-1.8" width="8" height="3.6" fill="#fff" transform="translate(683 397) rotate(-58)"/>
<rect x="687.9" y="401" width="4.3" height="4.3" fill="#ffffff" />
<line x1="700.5" y1="393" x2="700.5" y2="412" stroke="#ffffff" stroke-width="1" />
<line x1="697" y1="393.5" x2="702.5" y2="393.5" stroke="#ffffff" stroke-width="1" />
<line x1="697" y1="402.5" x2="702.5" y2="402.5" stroke="#ffffff" stroke-width="1" />
<line x1="697" y1="412.5" x2="702.5" y2="412.5" stroke="#ffffff" stroke-width="1" />
<line x1="680.5" y1="404.7" x2="680.5" y2="412" stroke="#ffffff" stroke-width="1" />
<line x1="676" y1="404.5" x2="682" y2="404.5" stroke="#ffffff" stroke-width="1" />
<line x1="676" y1="412.5" x2="682" y2="412.5" stroke="#ffffff" stroke-width="1" />
<rect x="674" y="407.5" width="4.5" height="1.5" fill="#ffffff" />
<line x1="682.3" y1="416.5" x2="694.8" y2="416.5" stroke="#ffffff" stroke-width="1" />
<line x1="682.5" y1="412" x2="682.5" y2="419" stroke="#ffffff" stroke-width="1" />
<line x1="689.5" y1="412" x2="689.5" y2="419" stroke="#ffffff" stroke-width="1" />
<line x1="694.5" y1="412" x2="694.5" y2="419" stroke="#ffffff" stroke-width="1" />
<circle cx="689" cy="426.3" r="3.6" fill="none" stroke="#fff" stroke-width="1" shape-rendering="auto"/><text x="689" y="428.7" font-size="6.5" fill="#fff" text-anchor="middle" font-weight="bold">3</text>
<polygon points="718.2,383.3 731,383.3 733,389 734.6,396 734.6,412 718.2,412" fill="url(#st1)" stroke="#ffffff" stroke-width="1.4" />
<rect x="718.2" y="410" width="16.4" height="2.2" fill="#ffffff" />
<line x1="720" y1="410.5" x2="733.5" y2="410.5" stroke="#555" stroke-width="1" stroke-dasharray="2,1.5"/>
<rect x="682.3" y="410.2" width="12.5" height="2.1" fill="#ffffff" />
<line x1="684" y1="411.5" x2="694" y2="411.5" stroke="#555" stroke-width="1" stroke-dasharray="2,1.5"/>
<polygon points="720.6,387.8 724.4,384.4 726.4,385.6 729.6,384.2 727.6,388 724.6,391.6" fill="#ffffff" stroke="none" stroke-width="0" />
<rect x="722.8" y="394.6" width="5.0" height="4.4" fill="#ffffff" />
<line x1="712.5" y1="383.3" x2="712.5" y2="409.7" stroke="#ffffff" stroke-width="1" />
<line x1="711" y1="383.5" x2="717" y2="383.5" stroke="#ffffff" stroke-width="1" />
<line x1="711" y1="409.5" x2="717" y2="409.5" stroke="#ffffff" stroke-width="1" />
<rect x="708.8" y="395.2" width="3.7" height="1.6" fill="#ffffff" />
<line x1="740.5" y1="383.3" x2="740.5" y2="399.3" stroke="#ffffff" stroke-width="1" />
<line x1="735" y1="383.5" x2="742" y2="383.5" stroke="#ffffff" stroke-width="1" />
<rect x="736" y="388" width="3.4" height="4" fill="#ffffff" />
<rect x="740" y="399.2" width="10.7" height="4.8" fill="#ffffff" />
<line x1="734.6" y1="399.5" x2="750.5" y2="399.5" stroke="#ffffff" stroke-width="1" />
<line x1="718" y1="416.5" x2="734.4" y2="416.5" stroke="#ffffff" stroke-width="1" />
<line x1="718.5" y1="412" x2="718.5" y2="419" stroke="#ffffff" stroke-width="1" />
<line x1="726.5" y1="412" x2="726.5" y2="419" stroke="#ffffff" stroke-width="1" />
<line x1="734.5" y1="412" x2="734.5" y2="419" stroke="#ffffff" stroke-width="1" />
<circle cx="726" cy="426.3" r="3.6" fill="none" stroke="#fff" stroke-width="1" shape-rendering="auto"/><text x="726" y="428.7" font-size="6.5" fill="#fff" text-anchor="middle" font-weight="bold">4</text>
<rect x="758.4" y="395" width="31.9" height="17" fill="url(#st1)" stroke="#ffffff" stroke-width="1.2"/>
<rect x="758.2" y="409.6" width="32.3" height="2.6" fill="#ffffff" />
<line x1="760" y1="410.5" x2="789" y2="410.5" stroke="#555" stroke-width="1" stroke-dasharray="2,1.5"/>
<rect x="771.9" y="401" width="5.6" height="4.7" fill="#ffffff" />
<rect x="790.5" y="399.5" width="5.5" height="1.5" fill="#ffffff" />
<rect x="790.5" y="404.4" width="5.5" height="1.4" fill="#ffffff" />
<rect x="790.5" y="409.8" width="5.5" height="2.2" fill="#ffffff" />
<line x1="758.4" y1="417.5" x2="790.3" y2="417.5" stroke="#ffffff" stroke-width="1" />
<line x1="758.5" y1="412" x2="758.5" y2="418.8" stroke="#ffffff" stroke-width="1" />
<line x1="774.5" y1="412" x2="774.5" y2="418.8" stroke="#ffffff" stroke-width="1" />
<line x1="790.5" y1="412" x2="790.5" y2="418.8" stroke="#ffffff" stroke-width="1" />
<line x1="795.5" y1="413" x2="795.5" y2="419" stroke="#ffffff" stroke-width="1" />
<circle cx="775.5" cy="426.3" r="3.9" fill="none" stroke="#fff" stroke-width="1" shape-rendering="auto"/><text x="775.5" y="428.7" font-size="6.5" fill="#fff" text-anchor="middle" font-weight="bold">5</text>
<text x="704.4" y="437.8" font-size="6" fill="#ffffff" stroke="#ffffff" stroke-width="0.45" font-weight="bold" textLength="48" lengthAdjust="spacingAndGlyphs">路缘石大样图、平石大样</text>
<rect x="701" y="439" width="52" height="2" fill="#ffffff" />
<rect x="717.5" y="441" width="17.5" height="3.8" fill="#ffffff" />
</svg>
</div>
</body></html>
